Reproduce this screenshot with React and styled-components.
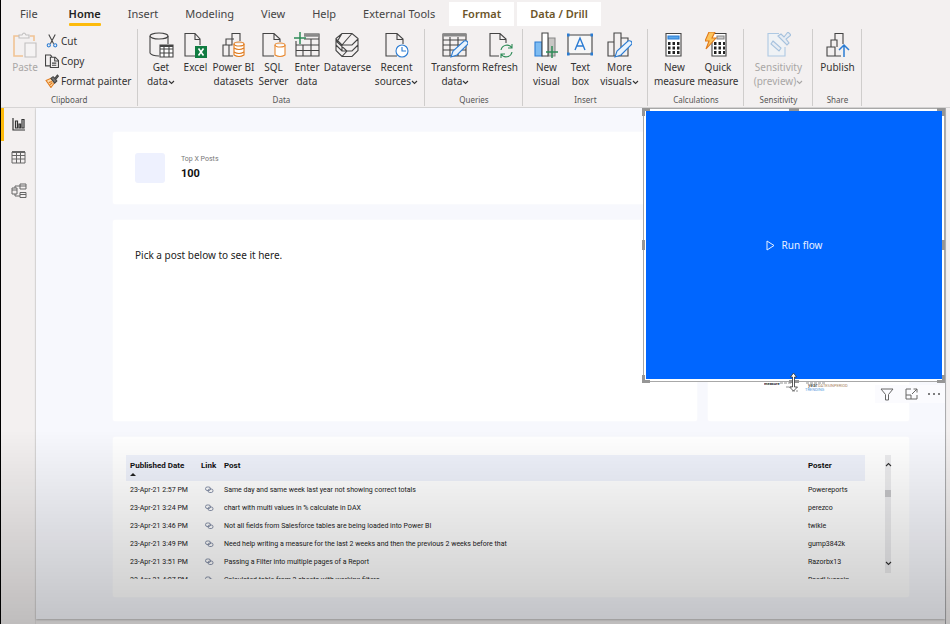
import React from 'react';
import styled, { createGlobalStyle } from 'styled-components';

const GlobalStyle = createGlobalStyle`
    * {
        box-sizing: border-box;
    }

    body {
        margin: 0;
        font-family: 'Noto Sans', 'Open Sans', sans-serif;
        font-size: 10px;
        color: #333;
    }

    button {
        font: inherit;
        color: inherit;
        background: none;
        border: 0;
        padding: 0;
    }
`

const Window = styled.div`
    display: flex;
    flex-direction: column;
    min-height: 100vh;
    padding-top: 2px;
    background: #f3f0f0;
    border-left: 1px solid #000;
`

/* ribbon */

const Tabs = styled.nav`
    display: flex;
    gap: 1px;
    height: 24px;
    padding-left: 6px;
    font-size: 11px;
`

const Tab = styled.button`
    position: relative;
    padding: 0 13px;
    margin-right: ${props => (props.$context ? '2px' : '0')};
    line-height: 22px;
    white-space: nowrap;
    color: ${props => (props.$context ? '#6b5429' : props.$active ? '#222' : '#444')};
    background: ${props => (props.$context ? '#fff' : 'transparent')};
    font-weight: ${props => (props.$active || props.$context ? 600 : 400)};

    &:first-child {
        margin-right: 4px;
    }

    &::after {
        content: '';
        display: ${props => (props.$active ? 'block' : 'none')};
        position: absolute;
        left: 13px;
        right: 13px;
        bottom: 0;
        height: 3px;
        border-radius: 1px;
        background: #fdbb0c;
    }
`

const Ribbon = styled.div`
    display: flex;
    padding: 3px 0 1px;
    height: 82px;
    border-bottom: 1px solid #d6d4d4;
`

const Group = styled.section`
    display: flex;
    flex-direction: column;
    justify-content: space-between;
    padding: 0 4px;
    border-right: 1px solid #cfcdcc;
`

const GroupItems = styled.div`
    display: flex;
    align-items: flex-start;
`

const GroupName = styled.div`
    font-size: 8px;
    line-height: 12px;
    text-align: center;
    color: #555;
`

const RibbonButton = styled.button`
    display: flex;
    flex-direction: column;
    align-items: center;
    width: ${props => props.$width}px;
    padding-top: 3px;
    line-height: 14px;
    white-space: nowrap;
    color: ${props => (props.disabled ? '#a9a7a6' : '#333')};

    > svg {
        margin-bottom: 2px;
    }
`

const SmallButtons = styled.div`
    display: flex;
    flex-direction: column;
    padding: 2px 2px 0 0;
`

const SmallButton = styled.button`
    display: flex;
    align-items: center;
    gap: 2px;
    height: 20px;
    white-space: nowrap;
`

/* workspace */

const Workspace = styled.div`
    display: flex;
    flex: 1;
`

const Sidebar = styled.aside`
    display: flex;
    flex-direction: column;
    width: 35px;
    border-right: 1px solid #e3e1e1;
`

const SideButton = styled.button`
    display: flex;
    align-items: center;
    height: 33px;
    padding-left: ${props => (props.$active ? '8px' : '10px')};
    border-left: ${props => (props.$active ? '3px solid #fdbb0c' : '0')};
`

const Page = styled.main`
    display: flex;
    flex-direction: column;
    flex: 1;
    margin-right: 4px;
    border-right: 1px solid #a5a5a8;
`

const Canvas = styled.div`
    position: relative;
    display: flex;
    flex-direction: column;
    gap: 16px;
    flex: 1;
    margin-bottom: 5px;
    padding: 24px 36px 22px 77px;
    background: #f7f8fd;
    box-shadow: 0 1px 2px #bbb;
`

const Card = styled.section`
    background: #fff;
    border-radius: 2px;
    box-shadow: 0 0 2px #fff;
`

const KpiCard = styled(Card)`
    display: flex;
    align-items: center;
    gap: 16px;
    height: 72px;
    padding: 0 22px;
`

const KpiTile = styled.div`
    width: 30px;
    height: 30px;
    border-radius: 3px;
    background: #eef1fe;
`

const KpiLabel = styled.div`
    font: 7px/12px Roboto, sans-serif;
    color: #777;
`

const KpiValue = styled.div`
    font: 700 11px/18px Roboto, sans-serif;
    color: #111;
`

const CardRow = styled.div`
    display: flex;
    gap: 11px;
    height: 201px;
`

const PreviewCard = styled(Card)`
    flex: 1;
    padding: 27px 22px;
    line-height: 16px;
    color: #222;
`

const CloudCard = styled(Card)`
    display: flex;
    flex-direction: column;
    justify-content: flex-end;
    align-items: center;
    width: 201px;
    padding-bottom: 28px;
`

const TableCard = styled(Card)`
    display: flex;
    justify-content: space-between;
    align-items: flex-start;
    height: 160px;
    padding: 18px 18px 18px 13px;
`

const TableClip = styled.div`
    flex: 1;
    height: 124px;
    margin-right: 20px;
    overflow: hidden;
`

const PostTable = styled.table`
    width: 100%;
    border-collapse: collapse;
    table-layout: fixed;
    font: 7px/10px Roboto, sans-serif;
    color: #222;

    th,
    td {
        height: 18px;
        padding: 0 0 0 4px;
        text-align: left;
        white-space: nowrap;
    }

    th {
        position: relative;
        height: 26px;
        padding-bottom: 5px;
        background: #eff2fb;
        font-size: 8px;
        color: #111;
    }

    svg {
        display: block;
        margin-left: 4px;
    }
`

const SortMark = styled.span`
    position: absolute;
    left: 4px;
    bottom: 5px;
    border: 3px solid transparent;
    border-top: 0;
    border-bottom: 3px solid #222;
`

const Scrollbar = styled.div`
    display: flex;
    flex-direction: column;
    align-items: center;
    width: 6px;
    height: 118px;
    padding: 7px 0;
    background: #ececee;
`

const ScrollThumb = styled.div`
    width: 6px;
    height: 7px;
    margin: 23px 0 auto;
    background: #c6c6c9;
`

/* selected visual */

const SelectedVisual = styled.div`
    position: absolute;
    top: 0;
    right: 0;
    width: 302px;
    height: 274px;
    padding: 2px;
    background: #fff;
    border: 1px solid #a8a8a8;
`

const RunButton = styled.button`
    display: flex;
    align-items: center;
    justify-content: center;
    gap: 7px;
    width: 100%;
    height: 100%;
    background: #0066ff;
    color: #e8f1ff;
`

const Handle = styled.span`
    position: absolute;
    border: 0 solid #969696;
    ${props => props.$place}
`

const VisualTools = styled.div`
    position: absolute;
    top: 277px;
    right: 0;
    display: flex;

    button {
        display: flex;
        align-items: center;
        justify-content: center;
        width: 24px;
        height: 18px;
        background: #fbfbfe;
    }

    button:last-child {
        width: 22px;
    }
`

const ResizeCursor = styled.svg`
    position: absolute;
    top: 264px;
    right: 146px;
`

const Shade = styled.div`
    position: fixed;
    left: 0;
    right: 0;
    bottom: 0;
    height: 194px;
    pointer-events: none;
    background: linear-gradient(rgba(0, 0, 0, 0), rgba(0, 0, 0, 0.21));
`

const Icon = ({ size = 26, children, ...rest }) => (
    <svg width={size} height={size} viewBox="0 0 26 26" fill="none" stroke="#444" strokeWidth="1.1" aria-hidden="true" {...rest}>
        {children}
    </svg>
)

const Chevron = ({ up }) => (
    <svg width="7" height="5" viewBox="0 0 7 5" fill="none" stroke="currentColor" strokeWidth="1.1" aria-hidden="true">
        <path d={up ? 'M1 4l2.5-2.5L6 4' : 'M1 1l2.5 2.5L6 1'} />
    </svg>
)

const icons = {
    paste: (
        <Icon opacity="0.55">
            <path d="M7 4H2v20h9M18 4h4v5" stroke="#f0a04a" strokeWidth="1.6" />
            <path d="M7 6V3h3q2-4 4 0h3v3zM13 11h11v14H13z" stroke="#999" fill="#f8f7f7" />
        </Icon>
    ),
    getData: (
        <Icon>
            <ellipse cx="11" cy="4" rx="9" ry="3" />
            <path d="M2 4v17q2 3 9 3M20 4v8" />
            <path d="M12 13h13v12H12zM12 17h13M12 21h13M16 14v11M21 14v11" fill="#fff" />
            <path d="M12 14h13" strokeWidth="2" />
        </Icon>
    ),
    excel: (
        <Icon>
            <path d="M18 13V7l-5-5.5H3V24h10M13 1.5v6h5" />
            <path d="M13 14h12v12H13z" fill="#107c41" stroke="none" />
            <path d="M16.5 16.5l5 7M21.5 16.5l-5 7" stroke="#fff" strokeWidth="1.6" />
        </Icon>
    ),
    powerbi: (
        <Icon>
            <path d="M13 24H3V13h6v11M6 13V7h8M12 10V1.5h8V9M9 13h3V7" />
            <path d="M14 12v11q5 3 10 0V12" stroke="#e07a1c" fill="#fff" />
            <ellipse cx="19" cy="12" rx="5" ry="2" stroke="#e07a1c" />
            <path d="M14 16q5 3 10 0M14 20q5 3 10 0" stroke="#e07a1c" />
        </Icon>
    ),
    sql: (
        <Icon>
            <path d="M20 10V7l-6-5.5H3V24h11M14 1.5v6h6" />
            <path d="M15 13v10q5 3 10 0V13" stroke="#e8882e" fill="#fff" />
            <ellipse cx="20" cy="13" rx="5" ry="2" stroke="#e8882e" />
        </Icon>
    ),
    enter: (
        <Icon>
            <path d="M2 9v15h23V2H10M2 13h23M2 18.5h23M9 13v11M17 7v17M10 7h15" />
            <path d="M10 3.5h15" strokeWidth="2.5" stroke="#888" />
            <path d="M6 0v12M0 6h12" stroke="#2e8b57" strokeWidth="1.5" />
        </Icon>
    ),
    dataverse: (
        <Icon>
            <path d="M8 1.5h10l6 5v12l-6 6H8l-6-6v-12zM2 7l6 6h10l6-6M2 13l6 6h10l6-6M8 1.5L3 10l10 9-5 5.5M18 1.5L8 13M8 13v6" />
        </Icon>
    ),
    recent: (
        <Icon>
            <path d="M20 12V7l-6-5.5H3V24h11M14 1.5v6h6" />
            <circle cx="19" cy="19" r="6" stroke="#2b7cd3" fill="#fff" />
            <path d="M19 15v4h4" stroke="#2b7cd3" />
        </Icon>
    ),
    transform: (
        <Icon>
            <path d="M1 2h23v22H1zM1 8h23M1 13h23M1 18h23M8 5v19M16 5v19" />
            <path d="M1 3h23" strokeWidth="3" stroke="#888" />
            <path d="M9 25l2-6L22 9q4-1 4 3L15 23z" fill="#e9f3fd" stroke="#2b7cd3" />
        </Icon>
    ),
    refresh: (
        <Icon>
            <path d="M19 11V7l-6-5.5H3V24h9M13 1.5v6h6" />
            <path d="M14 18a6 6 0 0 1 11-2M25 12v4h-4M25 20a6 6 0 0 1-11 2M14 26v-4h4" stroke="#2e8b57" />
        </Icon>
    ),
    newVisual: (
        <Icon>
            <path d="M2 10h7v14H2z" fill="#7ebcf2" stroke="#2b7cd3" />
            <path d="M15 6h7v18h-7z" fill="#c8c6c4" stroke="#888" />
            <path d="M9 1h6v23H9z" fill="#fff" />
            <path d="M19 14v12M13 20h12" stroke="#2e8b57" strokeWidth="1.5" />
        </Icon>
    ),
    textBox: (
        <Icon>
            <path d="M1 3h24v19H1z" fill="#f7f7f7" />
            <path d="M8 18l5-12 5 12M10 14h6" stroke="#2b7cd3" strokeWidth="1.4" />
            <path d="M0 2h2v2H0zM24 2h2v2h-2zM0 21h2v2H0zM24 21h2v2h-2z" fill="#2b7cd3" stroke="#2b7cd3" />
        </Icon>
    ),
    moreVisuals: (
        <Icon>
            <path d="M2 10h6v14H2zM8 1h7v23H8zM15 6h7v18h-7z" />
            <path d="M9 25l2-6L22 9q4-1 4 3L15 23z" fill="#e9f3fd" stroke="#2b7cd3" />
        </Icon>
    ),
    measure: (
        <Icon>
            <path d="M5 1.5h15V24H5z" fill="#fff" />
            <path d="M7 4h11v3H7z" fill="#58a6ea" stroke="#2b7cd3" />
            <path d="M7 11.5h12M7 16h12M7 20.5h12" stroke="#222" strokeWidth="3" strokeDasharray="2.5 2" />
        </Icon>
    ),
    quick: (
        <Icon>
            <path d="M7 1.5h14V24H7z" fill="#fff" />
            <path d="M12 4h7v3h-7z" fill="#ccc" stroke="#888" />
            <path d="M9 11.5h11M9 16h11M9 20.5h11" stroke="#222" strokeWidth="3" strokeDasharray="2.5 2" />
            <path d="M4 0h6L7 6h4L1 17l3-8H0z" fill="#fcc45c" stroke="#e07a1c" />
        </Icon>
    ),
    sensitivity: (
        <Icon opacity="0.5">
            <path d="M14 1.5H3V24h17V15" stroke="#6ba4d8" fill="#edf4fb" />
            <path d="M8 9l8 7-2 3-8-7zM13 4l3-2 3 3 4-5 3 3-5 4 3 4-2 2z" stroke="#5a94cc" fill="#dceaf7" />
        </Icon>
    ),
    publish: (
        <Icon>
            <path d="M12 24H3v-9h8v9M7 15V8h6v7M11 24h6M11 8V1.5h8V12" />
            <path d="M20 25V13M15 18l5-5 5 5" stroke="#2b7cd3" strokeWidth="1.5" />
        </Icon>
    ),
}

const tabs = ['File', 'Home', 'Insert', 'Modeling', 'View', 'Help', 'External Tools', 'Format', 'Data / Drill']

const groups = [
    {
        name: 'Data',
        items: [
            { icon: 'getData', lines: ['Get', 'data'], width: 37, menu: true },
            { icon: 'excel', lines: ['Excel'], width: 32 },
            { icon: 'powerbi', lines: ['Power BI', 'datasets'], width: 44 },
            { icon: 'sql', lines: ['SQL', 'Server'], width: 36 },
            { icon: 'enter', lines: ['Enter', 'data'], width: 31 },
            { icon: 'dataverse', lines: ['Dataverse'], width: 50 },
            { icon: 'recent', lines: ['Recent', 'sources'], width: 48, menu: true },
        ],
    },
    {
        name: 'Queries',
        items: [
            { icon: 'transform', lines: ['Transform', 'data'], width: 52, menu: true },
            { icon: 'refresh', lines: ['Refresh'], width: 37 },
        ],
    },
    {
        name: 'Insert',
        items: [
            { icon: 'newVisual', lines: ['New', 'visual'], width: 38 },
            { icon: 'textBox', lines: ['Text', 'box'], width: 30 },
            { icon: 'moreVisuals', lines: ['More', 'visuals'], width: 48, menu: true },
        ],
    },
    {
        name: 'Calculations',
        items: [
            { icon: 'measure', lines: ['New', 'measure'], width: 44 },
            { icon: 'quick', lines: ['Quick', 'measure'], width: 43 },
        ],
    },
    {
        name: 'Sensitivity',
        items: [{ icon: 'sensitivity', lines: ['Sensitivity', '(preview)'], width: 60, menu: true, disabled: true }],
    },
    {
        name: 'Share',
        items: [{ icon: 'publish', lines: ['Publish'], width: 40 }],
    },
]

const posts = [
    ['23-Apr-21 2:57 PM', 'Same day and same week last year not showing correct totals', 'Powereports'],
    ['23-Apr-21 3:24 PM', 'chart with multi values in % calculate in DAX', 'perezco'],
    ['23-Apr-21 3:46 PM', 'Not all fields from Salesforce tables are being loaded into Power BI', 'twikle'],
    ['23-Apr-21 3:49 PM', 'Need help writing a measure for the last 2 weeks and then the previous 2 weeks before that', 'gump3842k'],
    ['23-Apr-21 3:51 PM', 'Passing a Filter into multiple pages of a Report', 'Razorbx13'],
    ['23-Apr-21 4:07 PM', 'Calculated table from 2 sheets with working filters', 'RaedHussein'],
]

const handles = [
    'top: -1px; left: -2px; width: 8px; height: 8px; border-width: 3px 0 0 3px;',
    'top: -1px; right: -1px; width: 8px; height: 8px; border-width: 3px 3px 0 0;',
    'bottom: -2px; left: -2px; width: 8px; height: 8px; border-width: 0 0 3px 3px;',
    'bottom: -2px; right: -1px; width: 8px; height: 8px; border-width: 0 3px 3px 0;',
    'top: -1px; left: calc(50% - 5px); width: 10px; border-width: 3px 0 0;',
    'bottom: -2px; left: calc(50% - 5px); width: 10px; border-width: 3px 0 0;',
    'left: -2px; top: calc(50% - 5px); height: 10px; border-width: 0 0 0 3px;',
    'right: -1px; top: calc(50% - 5px); height: 10px; border-width: 0 0 0 3px;',
]

function ClipboardGroup() {
    return (
        <Group>
            <GroupItems>
                <RibbonButton $width={40} disabled>
                    {icons.paste}
                    <span>Paste</span>
                </RibbonButton>
                <SmallButtons>
                    <SmallButton>
                        <Icon size={14}>
                            <path d="M7 1l9 17M19 1l-9 17" strokeWidth="2" />
                            <circle cx="7" cy="21" r="3" stroke="#2b7cd3" strokeWidth="2" />
                            <circle cx="19" cy="21" r="3" stroke="#2b7cd3" strokeWidth="2" />
                        </Icon>
                        Cut
                    </SmallButton>
                    <SmallButton>
                        <Icon size={14}>
                            <path d="M9 22H1V2h9l3 3M10 6h9l6 6v13H10zM18 6v7h7M13 17h8M13 21h8" strokeWidth="2" />
                        </Icon>
                        Copy
                    </SmallButton>
                    <SmallButton>
                        <Icon size={14}>
                            <path d="M2 12l9-4 7 8-7 9zM7 16l6-2M9 20l5-4" stroke="#e07a1c" fill="#fbdcae" strokeWidth="2" />
                            <path d="M11 8l4-3 7 8-4 4zM18 8l5-6 2 2-5 6" fill="#777" strokeWidth="2" />
                        </Icon>
                        Format painter
                    </SmallButton>
                </SmallButtons>
            </GroupItems>
            <GroupName>Clipboard</GroupName>
        </Group>
    )
}

function RibbonGroup({ group }) {
    return (
        <Group>
            <GroupItems>
                {group.items.map(item => (
                    <RibbonButton key={item.icon} $width={item.width} disabled={item.disabled}>
                        {icons[item.icon]}
                        {item.lines.map((line, index) => (
                            <span key={line}>
                                {line}
                                {item.menu && index === item.lines.length - 1 && <Chevron />}
                            </span>
                        ))}
                    </RibbonButton>
                ))}
            </GroupItems>
            <GroupName>{group.name}</GroupName>
        </Group>
    )
}

function PostsCard() {
    return (
        <TableCard>
            <TableClip>
                <PostTable>
                    <colgroup>
                        <col width="71" />
                        <col width="23" />
                        <col />
                        <col width="61" />
                    </colgroup>
                    <thead>
                        <tr>
                            <th>Published Date<SortMark /></th>
                            <th>Link</th>
                            <th>Post</th>
                            <th>Poster</th>
                        </tr>
                    </thead>
                    <tbody>
                        {posts.map(([date, title, poster]) => (
                            <tr key={date}>
                                <td>{date}</td>
                                <td>
                                    <svg width="9" height="8" viewBox="0 0 9 8" fill="none" stroke="#6c7896" strokeWidth="0.8" aria-hidden="true">
                                        <rect x="0.5" y="1" width="5" height="3.5" rx="1.7" />
                                        <rect x="3" y="3" width="5" height="3.5" rx="1.7" />
                                    </svg>
                                </td>
                                <td>{title}</td>
                                <td>{poster}</td>
                            </tr>
                        ))}
                    </tbody>
                </PostTable>
            </TableClip>
            <Scrollbar>
                <Chevron up />
                <ScrollThumb />
                <Chevron />
            </Scrollbar>
        </TableCard>
    )
}

function FlowVisual() {
    return (
        <>
            <SelectedVisual>
                <RunButton>
                    <svg width="9" height="11" viewBox="0 0 9 11" fill="none" stroke="currentColor" aria-hidden="true">
                        <path d="M1 1l7 4.5L1 10z" />
                    </svg>
                    Run flow
                </RunButton>
                {handles.map(place => <Handle key={place} $place={place} />)}
            </SelectedVisual>
            <VisualTools>
                <button aria-label="Filters">
                    <svg width="14" height="13" viewBox="0 0 14 13" fill="none" stroke="#666">
                        <path d="M1 1h12L8.5 6.5V12h-3V6.5z" />
                    </svg>
                </button>
                <button aria-label="Focus mode">
                    <svg width="13" height="12" viewBox="0 0 13 12" fill="none" stroke="#666">
                        <path d="M6 1H1v10h11V7M1 7h5v4M7 6l5-5M8.5 1H12v3.5" />
                    </svg>
                </button>
                <button aria-label="More options">
                    <svg width="14" height="4" viewBox="0 0 14 4" fill="#555">
                        <circle cx="2" cy="2" r="1" />
                        <circle cx="7" cy="2" r="1" />
                        <circle cx="12" cy="2" r="1" />
                    </svg>
                </button>
            </VisualTools>
            <ResizeCursor width="11" height="20" viewBox="0 0 11 20" fill="#fff" stroke="#333" strokeWidth="0.8">
                <path d="M5.5 1l3 4h-2v10h3l-4 4-4-4h3V5h-2z" />
            </ResizeCursor>
        </>
    )
}

function App() {
    return (
        <Window>
            <GlobalStyle />
            <Tabs>
                {tabs.map((tab, index) => (
                    <Tab key={tab} $active={tab === 'Home'} $context={index > 6}>{tab}</Tab>
                ))}
            </Tabs>
            <Ribbon>
                <ClipboardGroup />
                {groups.map(group => <RibbonGroup key={group.name} group={group} />)}
            </Ribbon>

            <Workspace>
                <Sidebar>
                    <SideButton $active aria-label="Report">
                        <svg width="14" height="13" viewBox="0 0 14 13" fill="none" stroke="#333" strokeWidth="1.2">
                            <path d="M1 0v12h12M3.5 10V3h2v7zM7 10V6h1.5v4zM10 10V1.5h2V10z" />
                        </svg>
                    </SideButton>
                    <SideButton aria-label="Data">
                        <svg width="15" height="13" viewBox="0 0 15 13" fill="none" stroke="#666">
                            <path d="M1 1h13v11H1zM1 4.5h13M1 8h13M5.5 2v10M9.5 2v10" />
                            <path d="M1 1h13" strokeWidth="2" />
                        </svg>
                    </SideButton>
                    <SideButton aria-label="Model">
                        <svg width="16" height="16" viewBox="0 0 16 16" fill="none" stroke="#666">
                            <path d="M1 5h5v6H1zM9 1h6v5H9zM9 9.5h6v5H9zM1 7h5M9 3h6M9 11.5h6M4 5V3h5M4 11v2h5" />
                        </svg>
                    </SideButton>
                </Sidebar>

                <Page>
                    <Canvas>
                        <KpiCard>
                            <KpiTile />
                            <div>
                                <KpiLabel>Top X Posts</KpiLabel>
                                <KpiValue>100</KpiValue>
                            </div>
                        </KpiCard>
                        <CardRow>
                            <PreviewCard>Pick a post below to see it here.</PreviewCard>
                            <CloudCard>
                                <svg width="90" height="12" viewBox="0 0 90 12" fontFamily="Roboto" fontSize="4">
                                    <text x="0" y="4" fontWeight="700" fill="#222">measure</text>
                                    <path d="M16 2h14M42 2h20M22 6h8M28 10h6" stroke="#777" strokeDasharray="3 1" strokeWidth="0.8" />
                                    <text x="44" y="6" fontSize="5" fill="#333">year</text>
                                    <text x="54" y="6" fill="#a8845c">DATESINPERIOD</text>
                                    <text x="41" y="10" fill="#5c9de0">TRENDING</text>
                                </svg>
                            </CloudCard>
                        </CardRow>
                        <PostsCard />
                        <FlowVisual />
                    </Canvas>
                </Page>
            </Workspace>
            <Shade />
        </Window>
    )
}

export default App;
